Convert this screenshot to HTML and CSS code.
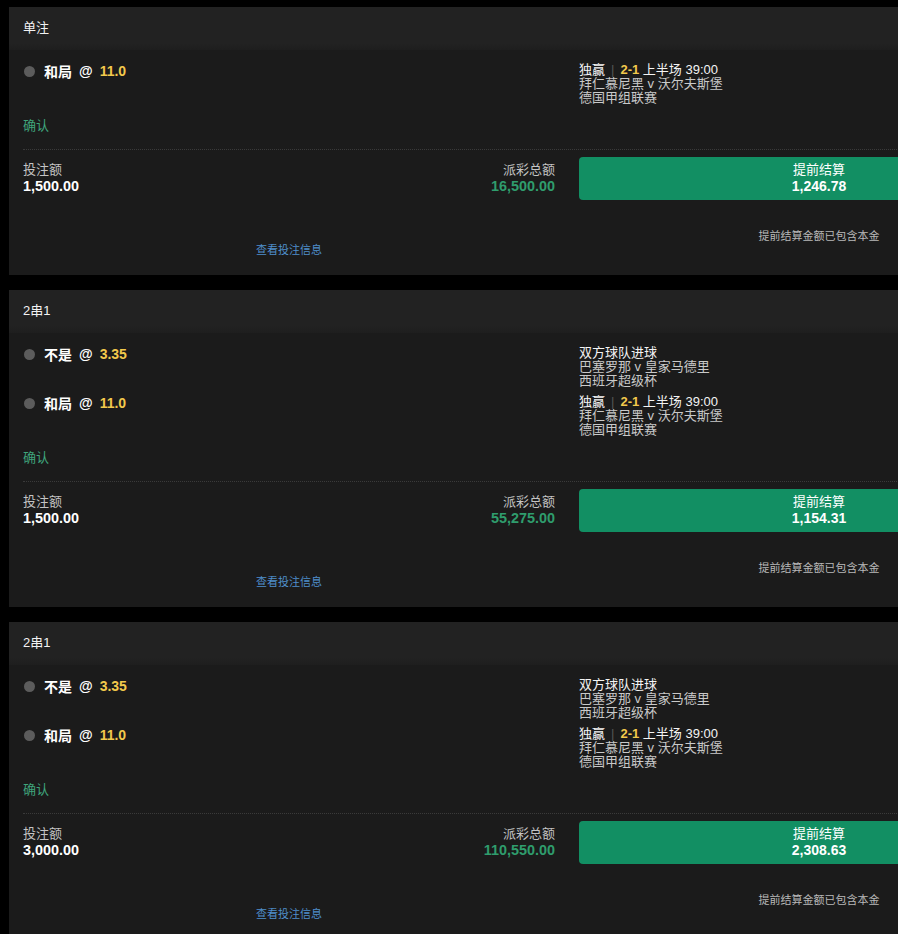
FILE: index.html
```html
<!DOCTYPE html>
<html lang="zh-CN">
<head>
<meta charset="utf-8">
<title>投注记录</title>
<link rel="stylesheet" href="styles.css">
</head>
<body>
<div class="page">

  <section class="card">
    <header class="card-head">单注</header>
    <div class="card-body">
      <div class="rows">
        <div class="row">
          <div class="sel"><span class="dot"></span><span class="sel-name">和局</span><span class="at">@</span><span class="odds">11.0</span></div>
          <div class="info">
            <div class="l1">独赢<span class="pipe">|</span><span class="score">2-1</span> 上半场 39:00</div>
            <div class="l2">拜仁慕尼黑 v 沃尔夫斯堡</div>
            <div class="l2">德国甲组联赛</div>
          </div>
        </div>
      </div>
      <div class="status">确认</div>
      <div class="sep"></div>
      <div class="stake-row">
        <div class="amounts">
          <div class="amt">
            <div class="label">投注额</div>
            <div class="val">1,500.00</div>
          </div>
          <div class="amt right">
            <div class="label">派彩总额</div>
            <div class="val green">16,500.00</div>
          </div>
        </div>
        <button class="cashout"><span class="co-label">提前结算</span><span class="co-val">1,246.78</span></button>
      </div>
      <div class="foot">
        <a class="link">查看投注信息</a>
        <div class="note">提前结算金额已包含本金</div>
      </div>
    </div>
  </section>

  <section class="card">
    <header class="card-head">2串1</header>
    <div class="card-body">
      <div class="rows">
        <div class="row">
          <div class="sel"><span class="dot"></span><span class="sel-name">不是</span><span class="at">@</span><span class="odds">3.35</span></div>
          <div class="info">
            <div class="l1">双方球队进球</div>
            <div class="l2">巴塞罗那 v 皇家马德里</div>
            <div class="l2">西班牙超级杯</div>
          </div>
        </div>
        <div class="row">
          <div class="sel"><span class="dot"></span><span class="sel-name">和局</span><span class="at">@</span><span class="odds">11.0</span></div>
          <div class="info">
            <div class="l1">独赢<span class="pipe">|</span><span class="score">2-1</span> 上半场 39:00</div>
            <div class="l2">拜仁慕尼黑 v 沃尔夫斯堡</div>
            <div class="l2">德国甲组联赛</div>
          </div>
        </div>
      </div>
      <div class="status">确认</div>
      <div class="sep"></div>
      <div class="stake-row">
        <div class="amounts">
          <div class="amt">
            <div class="label">投注额</div>
            <div class="val">1,500.00</div>
          </div>
          <div class="amt right">
            <div class="label">派彩总额</div>
            <div class="val green">55,275.00</div>
          </div>
        </div>
        <button class="cashout"><span class="co-label">提前结算</span><span class="co-val">1,154.31</span></button>
      </div>
      <div class="foot">
        <a class="link">查看投注信息</a>
        <div class="note">提前结算金额已包含本金</div>
      </div>
    </div>
  </section>

  <section class="card">
    <header class="card-head">2串1</header>
    <div class="card-body">
      <div class="rows">
        <div class="row">
          <div class="sel"><span class="dot"></span><span class="sel-name">不是</span><span class="at">@</span><span class="odds">3.35</span></div>
          <div class="info">
            <div class="l1">双方球队进球</div>
            <div class="l2">巴塞罗那 v 皇家马德里</div>
            <div class="l2">西班牙超级杯</div>
          </div>
        </div>
        <div class="row">
          <div class="sel"><span class="dot"></span><span class="sel-name">和局</span><span class="at">@</span><span class="odds">11.0</span></div>
          <div class="info">
            <div class="l1">独赢<span class="pipe">|</span><span class="score">2-1</span> 上半场 39:00</div>
            <div class="l2">拜仁慕尼黑 v 沃尔夫斯堡</div>
            <div class="l2">德国甲组联赛</div>
          </div>
        </div>
      </div>
      <div class="status">确认</div>
      <div class="sep"></div>
      <div class="stake-row">
        <div class="amounts">
          <div class="amt">
            <div class="label">投注额</div>
            <div class="val">3,000.00</div>
          </div>
          <div class="amt right">
            <div class="label">派彩总额</div>
            <div class="val green">110,550.00</div>
          </div>
        </div>
        <button class="cashout"><span class="co-label">提前结算</span><span class="co-val">2,308.63</span></button>
      </div>
      <div class="foot">
        <a class="link">查看投注信息</a>
        <div class="note">提前结算金额已包含本金</div>
      </div>
    </div>
  </section>

</div>
</body>
</html>
```

FILE: styles.css
```css
html, body {
  margin: 0;
  padding: 0;
  background: #000;
  overflow: hidden;
  height: 100%;
}

body {
  font-family: "Liberation Sans", "Noto Sans CJK SC", sans-serif;
  font-size: 13px;
  color: #fff;
}

.page {
  display: flex;
  flex-direction: column;
  gap: 15px;
  padding: 7px 0 0 9px;
  width: 1064px;
}

.card {
  background: #1b1b1b;
  width: 1064px;
}

.card-head {
  height: 43px;
  line-height: 41px;
  padding: 0 14px;
  background: linear-gradient(#222222 0, #222222 36px, #1e1e1e 43px);
  font-size: 13px;
  color: #f2f2f2;
}

.card-body {
  padding: 13px 14px 18px 14px;
}

.rows {
  display: flex;
  flex-direction: column;
  gap: 7px;
}

.row {
  display: grid;
  grid-template-columns: 532px 480px;
  column-gap: 24px;
}

.sel {
  display: flex;
  align-items: center;
  height: 16px;
  font-size: 14px;
  font-weight: bold;
}

.dot {
  width: 11px;
  height: 11px;
  border-radius: 50%;
  background: #5c5c5c;
  margin-right: 9px;
  margin-left: 1px;
}

.sel-name {
  color: #fff;
  margin-right: 7px;
}

.at {
  color: #fff;
  margin-right: 7px;
}

.odds {
  color: #f2c94c;
}

.info {
  line-height: 14px;
  font-size: 13px;
}

.l1 {
  color: #f4f4f4;
}

.l2 {
  color: #c9c9c9;
}

.pipe {
  color: #555;
  margin: 0 6px;
}

.score {
  color: #f2c94c;
  font-weight: bold;
}

.status {
  margin-top: 14px;
  line-height: 14px;
  color: #3fa57b;
}

.sep {
  margin-top: 16px;
  border-top: 1px dotted #3a3a3a;
}

.stake-row {
  display: grid;
  grid-template-columns: 532px 480px;
  column-gap: 24px;
  margin-top: 7px;
}

.amounts {
  display: flex;
  justify-content: space-between;
  padding-top: 5px;
}

.amt .label {
  line-height: 16px;
  color: #c4c4c4;
}

.amt .val {
  line-height: 16px;
  font-weight: bold;
  font-size: 14.4px;
  color: #fff;
}

.amt.right {
  text-align: right;
}

.val.green {
  color: #2f9d6d;
}

.cashout {
  display: flex;
  flex-direction: column;
  align-items: center;
  height: 43px;
  padding: 5px 0 0 0;
  border: 0;
  border-radius: 4px;
  background: #128f63;
  color: #fff;
  font-family: inherit;
  font-size: 13px;
}

.co-label {
  line-height: 16px;
}

.co-val {
  line-height: 16px;
  font-weight: bold;
  font-size: 14px;
}

.foot {
  display: grid;
  grid-template-columns: 532px 480px;
  column-gap: 24px;
  margin-top: 29px;
  font-size: 11px;
  line-height: 14px;
}

.link {
  grid-column: 1;
  grid-row: 1;
  margin-top: 14px;
  text-align: center;
  color: #4f8fcc;
}

.note {
  grid-column: 2;
  grid-row: 1;
  text-align: center;
  color: #b8b8b8;
}
```
